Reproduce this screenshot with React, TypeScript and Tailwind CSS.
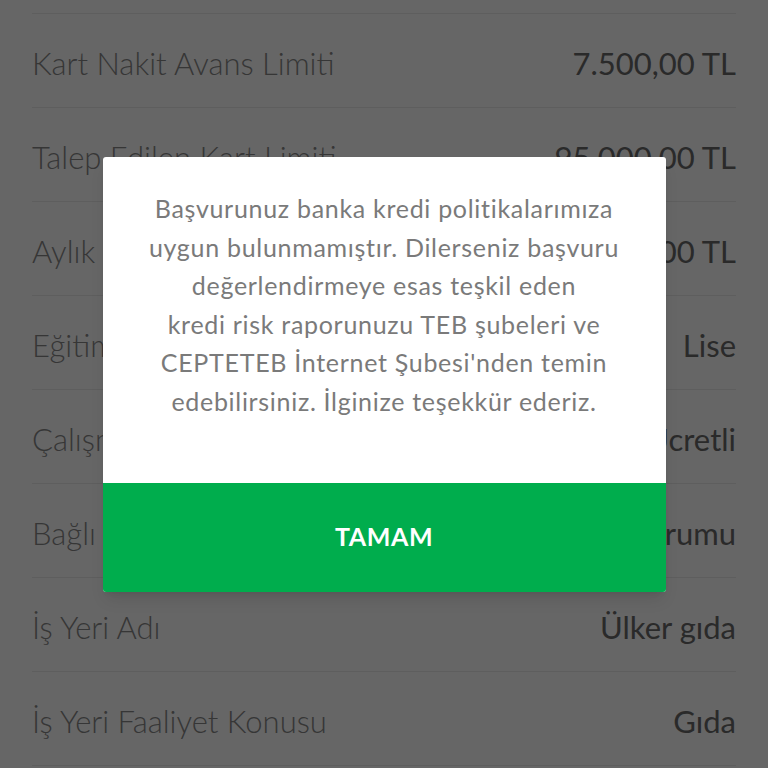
import React from 'react'

const rows = [
  { label: 'Kart Limiti', value: '25.000,00 TL' },
  { label: 'Kart Nakit Avans Limiti', value: '7.500,00 TL' },
  { label: 'Talep Edilen Kart Limiti', value: '95.000,00 TL' },
  { label: 'Aylık Net Gelir', value: '6.000,00 TL' },
  { label: 'Eğitim Durumu', value: 'Lise' },
  { label: 'Çalışma Şekli', value: 'Ücretli' },
  { label: 'Bağlı Olduğu Kurum', value: 'SGK Kurumu' },
  { label: 'İş Yeri Adı', value: 'Ülker gıda' },
  { label: 'İş Yeri Faaliyet Konusu', value: 'Gıda' },
]

export default function App() {
  return (
    <div
      className="relative w-[768px] h-[768px] overflow-hidden bg-white"
      style={{ fontFamily: 'Lato, "Noto Sans", sans-serif' }}
    >
      <div className="px-8 -mt-[80px]">
        {rows.map((row) => (
          <div
            key={row.label}
            className="h-[94px] flex items-center justify-between pt-[5px] border-b border-[#ebebeb]"
          >
            <span className="text-[31px] font-light text-[#888888]">{row.label}</span>
            <span className="text-[31px] font-normal text-[#6a6a6a]">{row.value}</span>
          </div>
        ))}
      </div>

      <div className="absolute inset-0 bg-black/60 flex items-start justify-center pt-[157px]">
        <div className="w-[563px] bg-white rounded-[3px] overflow-hidden shadow-lg">
          <p className="pt-[32px] pb-[62px] px-4 text-center text-[25px] tracking-[0.7px] leading-[38.6px] text-[#7a7a7a]">
            Başvurunuz banka kredi politikalarımıza
            <br />
            uygun bulunmamıştır. Dilerseniz başvuru
            <br />
            değerlendirmeye esas teşkil eden
            <br />
            kredi risk raporunuzu TEB şubeleri ve
            <br />
            CEPTETEB İnternet Şubesi'nden temin
            <br />
            edebilirsiniz. İlginize teşekkür ederiz.
          </p>
          <button className="w-full h-[109px] bg-[#00ad4d] text-white text-[25px] font-bold tracking-[0.6px]">
            TAMAM
          </button>
        </div>
      </div>
    </div>
  )
}
